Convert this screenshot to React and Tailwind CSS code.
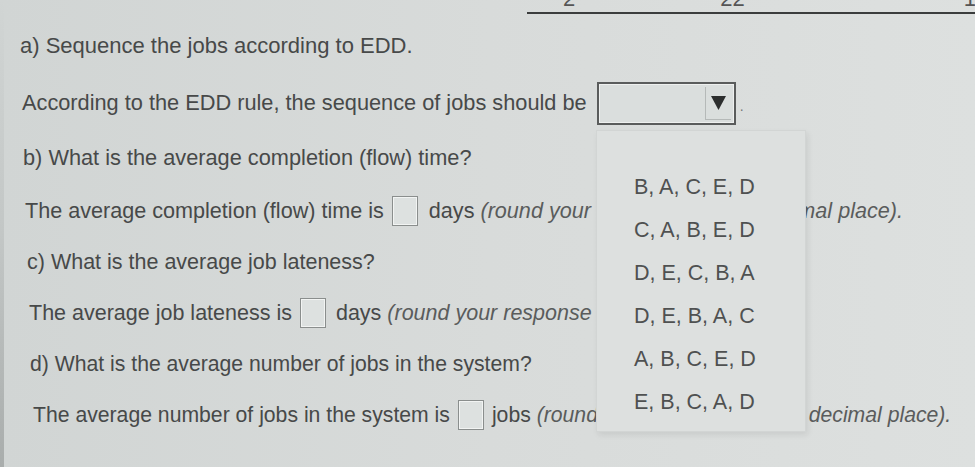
import React from "react";

const Box = ({ className = "" }) => (
  <span
    className={
      "inline-block w-[26px] h-[30px] border border-[#8a8e8d] shadow-[inset_0_0_0_1px_#f2f4f3] bg-[#dde1e0] " +
      className
    }
  />
);

const options = [
  "B, A, C, E, D",
  "C, A, B, E, D",
  "D, E, C, B, A",
  "D, E, B, A, C",
  "A, B, C, E, D",
  "E, B, C, A, D",
];

export default function App() {
  return (
    <div className="relative w-[975px] h-[467px] overflow-hidden bg-gradient-to-r from-[#d1d5d4] via-[#d8dbda] to-[#dde0df] font-['Liberation_Sans',Arial,sans-serif] text-[22px] text-[#474949]">
      <div className="flex h-full">
        <div className="w-[4px] shrink-0 bg-gradient-to-b from-transparent via-[#c3c7c6] to-[#a9adac]" />
        <div className="flex-1 flex flex-col">
          {/* top table fragment */}
          <div className="flex h-[20px]">
            <div className="ml-[523px] flex-1 h-[14px] border-b-2 border-[#3b3d3d] relative overflow-hidden">
              <div className="flex leading-[22px] -mt-[12px] text-[#555]">
                <span className="ml-[36px]">2</span>
                <span className="ml-[145px]">22</span>
                <span className="ml-[219px]">1</span>
              </div>
            </div>
          </div>

          <div className="h-[50px] flex items-center pl-[16px] text-[22px]">
            a) Sequence the jobs according to EDD.
          </div>

          <div className="h-[66px] flex items-center pl-[18px] whitespace-nowrap text-[21.75px]">
            <span>According to the EDD rule, the sequence of jobs should be</span>
            <span className="ml-[10px] w-[139px] h-[43px] border-2 border-[#5a5c5c] shadow-[inset_0_0_0_1px_#eef0ef] bg-[#dadedd] flex justify-end items-stretch p-[3px]">
              <span className="w-[26px] border-l border-b border-[#b5b9b8] flex items-center justify-center">
                <svg width="15" height="14" viewBox="0 0 15 14">
                  <path d="M0 0 H15 L7.5 14 Z" fill="#2c2e2e" />
                </svg>
              </span>
            </span>
            <span className="ml-[4px] text-[#777] text-[14px] mt-[6px]">.</span>
          </div>

          <div className="h-[44px] flex items-center pl-[19px] text-[21.75px]">
            b) What is the average completion (flow) time?
          </div>

          <div className="h-[62px] flex items-center pl-[21px] whitespace-nowrap text-[21.6px]">
            <span>The average completion (flow) time is</span>
            <Box className="ml-[8px] mr-[11px]" />
            <span>
              days <i className="text-[#5a5c5c]">(round your response to one decimal place).</i>
            </span>
          </div>

          <div className="h-[40px] flex items-center pl-[23px] text-[21.5px]">
            c) What is the average job lateness?
          </div>

          <div className="h-[62px] flex items-center pl-[25px] whitespace-nowrap text-[21.5px]">
            <span>The average job lateness is</span>
            <Box className="ml-[8px] mr-[10px]" />
            <span>
              days <i className="text-[#5a5c5c]">(round your response to a whole number).</i>
            </span>
          </div>

          <div className="h-[40px] flex items-center pl-[26px] text-[21.2px]">
            d) What is the average number of jobs in the system?
          </div>

          <div className="h-[62px] flex items-center pl-[29px] whitespace-nowrap text-[21.2px]">
            <span>The average number of jobs in the system is</span>
            <Box className="ml-[8px] mr-[8px]" />
            <span>
              jobs <i className="text-[#5a5c5c]">(round your response to one decimal place).</i>
            </span>
          </div>
        </div>
      </div>

      {/* open dropdown menu */}
      <div className="absolute left-[596px] top-[130px] w-[210px] h-[302px] bg-[#dde0df] border border-[#d2d5d4] shadow-[2px_3px_6px_rgba(0,0,0,0.08)] pt-[35px] pl-[37px] text-[#4f5151] text-[21.5px]">
        {options.map((o) => (
          <div key={o} className="h-[43px] flex items-center whitespace-nowrap">
            {o}
          </div>
        ))}
      </div>
    </div>
  );
}
